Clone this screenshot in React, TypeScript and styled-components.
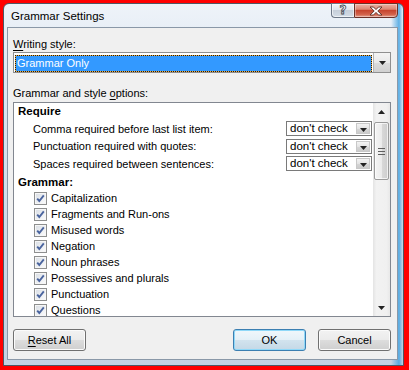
import React from 'react'
import styled, { createGlobalStyle } from 'styled-components'

const GlobalStyle = createGlobalStyle`
  body {
    margin: 0;
    background: #fff;
    font-family: "Liberation Sans", Arial, sans-serif;
    font-size: 11px;
    color: #000;
  }
`

const requireOptions = [
    'Comma required before last list item:',
    'Punctuation required with quotes:',
    'Spaces required between sentences:',
]

const grammarOptions = [
    'Capitalization',
    'Fragments and Run-ons',
    'Misused words',
    'Negation',
    'Noun phrases',
    'Possessives and plurals',
    'Punctuation',
    'Questions',
]

const Arrow = ({ up }: { up?: boolean }) => (
    <svg width="7" height="4" viewBox="0 0 7 4">
        <path d={up ? 'M0 4 L3.5 0 L7 4 Z' : 'M0 0 L7 0 L3.5 4 Z'} fill="#222" />
    </svg>
)

const CheckBox = () => (
    <CheckBoxBox>
        <svg width="11" height="11" viewBox="0 0 11 11">
            <path d="M2.2 5.6 L4.3 8 L8.8 2.4" fill="none" stroke="#4a649e" strokeWidth="1.9" />
        </svg>
    </CheckBoxBox>
)

const MiniSelect = ({ value }: { value: string }) => (
    <MiniSelectBox>
        <span>{value}</span>
        <MiniSelectButton>
            <Arrow />
        </MiniSelectButton>
    </MiniSelectBox>
)

const GrammarSettings = () => {
    return (
        <Window>
            <GlobalStyle />
            <Frame>
                <TitleBar>
                    <Title>Grammar Settings</Title>
                    <CaptionButtons>
                        <HelpButton>?</HelpButton>
                        <CloseButton>
                            <svg width="14" height="10" viewBox="0 0 14 10">
                                <path
                                    d="M1 1 L4.5 1 L7 3.6 L9.5 1 L13 1 L8.8 5 L13 9 L9.5 9 L7 6.4 L4.5 9 L1 9 L5.2 5 Z"
                                    fill="#fff"
                                    stroke="#5a2a22"
                                    strokeWidth="0.9"
                                    strokeLinejoin="round"
                                />
                            </svg>
                        </CloseButton>
                    </CaptionButtons>
                </TitleBar>

                <Client>
                    <Label><u>W</u>riting style:</Label>
                    <Select>
                        <Highlight>Grammar Only</Highlight>
                        <SelectButton>
                            <Arrow />
                        </SelectButton>
                    </Select>

                    <Label className="options">Grammar and style <u>o</u>ptions:</Label>
                    <ListBox>
                        <ListContent>
                            <Heading>Require</Heading>
                            {requireOptions.map((o) => (
                                <SettingRow key={o}>
                                    <span>{o}</span>
                                    <MiniSelect value="don't check" />
                                </SettingRow>
                            ))}
                            <Heading className="grammar">Grammar:</Heading>
                            {grammarOptions.map((o) => (
                                <CheckRow key={o}>
                                    <CheckBox />
                                    <span>{o}</span>
                                </CheckRow>
                            ))}
                        </ListContent>
                        <ScrollBar>
                            <ScrollArrow><Arrow up /></ScrollArrow>
                            <ScrollThumb>
                                <Grip />
                            </ScrollThumb>
                            <ScrollTrack />
                            <ScrollArrow><Arrow /></ScrollArrow>
                        </ScrollBar>
                    </ListBox>

                    <ButtonRow>
                        <Button><u>R</u>eset All</Button>
                        <Spacer />
                        <Button primary>OK</Button>
                        <Button>Cancel</Button>
                    </ButtonRow>
                </Client>
            </Frame>
        </Window>
    )
}

const Window = styled.div`
    width: 409px;
    height: 370px;
    box-sizing: border-box;
    background: #ff0000;
    border-style: solid;
    border-color: #ff0000;
    border-width: 3px 5px 4px 3px;
    display: flex;
`

const Frame = styled.div`
    flex: 1;
    display: flex;
    flex-direction: column;
    border: 1px solid #4d5866;
    border-radius: 6px 6px 0 0;
    padding: 0 5px 5px 3px;
    background:
        linear-gradient(90deg, rgba(255,255,255,0) 97%, rgba(60,160,225,0.8) 99%, rgba(255,255,255,0) 100%),
        linear-gradient(180deg, #eef3f9 0%, #dde7f2 20%, #cfdbe8 60%, #c4d2e2 100%);
`

const TitleBar = styled.div`
    height: 23px;
    display: flex;
    align-items: flex-start;
`

const Title = styled.div`
    padding: 5px 0 0 4px;
    line-height: 14px;
    font-size: 11.5px;
    color: #000;
`

const CaptionButtons = styled.div`
    margin-left: auto;
    margin-top: -1px;
    display: flex;
    height: 15px;
`

const HelpButton = styled.div`
    width: 23px;
    box-sizing: border-box;
    border: 1px solid #6c7787;
    border-right: none;
    border-radius: 0 0 0 4px;
    background: linear-gradient(180deg, #f1f4f8 0%, #dfe5ec 45%, #c6cfda 50%, #d4dde7 100%);
    box-shadow: inset 0 0 0 1px rgba(255,255,255,0.6);
    display: flex;
    align-items: center;
    justify-content: center;
    font-family: "DejaVu Sans", sans-serif;
    font-weight: bold;
    font-size: 12px;
    line-height: 13px;
    color: #fff;
    -webkit-text-stroke: 0.8px #3e4650;
`

const CloseButton = styled.div`
    width: 44px;
    box-sizing: border-box;
    border: 1px solid #6a3028;
    border-radius: 0 0 4px 0;
    background: linear-gradient(180deg, #eab2a5 0%, #dc8774 40%, #c7452f 50%, #d2624b 80%, #e6a08e 100%);
    box-shadow: inset 0 0 0 1px rgba(255,255,255,0.35);
    display: flex;
    align-items: center;
    justify-content: center;
`

const Client = styled.div`
    flex: 1;
    display: flex;
    flex-direction: column;
    background: #f0f0f0;
    border: 1px solid #8a98a8;
    padding: 0 6px 8px 5px;
    u {
        text-decoration: underline;
        text-underline-offset: 2px;
    }
`

const Label = styled.div`
    margin-top: 8px;
    height: 16px;
    line-height: 16px;
    &.options {
        margin-top: 12px;
    }
`

const Select = styled.div`
    height: 21px;
    box-sizing: border-box;
    border: 1px solid #8f8f8f;
    background: #fff;
    display: flex;
    padding: 1px 0 0 1px;
`

const Highlight = styled.div`
    flex: 1;
    height: 17px;
    margin-top: 1px;
    box-sizing: border-box;
    border: 1px dotted #1a1a1a;
    background:
        linear-gradient(#3399ff, #3399ff) padding-box,
        #f0b040 border-box;
    color: #fff;
    line-height: 15px;
    padding-left: 1px;
`

const SelectButton = styled.div`
    width: 17px;
    height: 19px;
    margin: -1px 0 0 1px;
    box-sizing: border-box;
    border-left: 1px solid #b5b5b5;
    background: linear-gradient(180deg, #f4f4f4 0%, #e9e9e9 50%, #dcdcdc 51%, #d0d0d0 100%);
    display: flex;
    align-items: center;
    justify-content: center;
`

const ListBox = styled.div`
    margin-top: 1px;
    height: 215px;
    box-sizing: border-box;
    border: 1px solid #828790;
    background: #fff;
    display: flex;
`

const ListContent = styled.div`
    flex: 1;
    overflow: hidden;
    padding: 0 1px 0 4px;
`

const Heading = styled.div`
    font-weight: bold;
    font-size: 11.5px;
    height: 17px;
    line-height: 17px;
    &.grammar {
        height: 17.5px;
        line-height: 18px;
    }
`

const SettingRow = styled.div`
    height: 17.5px;
    display: flex;
    align-items: center;
    justify-content: space-between;
    padding-left: 15px;
`

const MiniSelectBox = styled.div`
    width: 86px;
    height: 15px;
    box-sizing: border-box;
    border: 1px solid #7a7a7a;
    display: flex;
    align-items: center;
    padding-left: 3px;
    span {
        flex: 1;
        line-height: 13px;
        font-size: 11.5px;
    }
`

const MiniSelectButton = styled.div`
    width: 14px;
    height: 11px;
    margin-right: 1px;
    box-sizing: border-box;
    border: 1px solid #c8c8c8;
    background: linear-gradient(180deg, #f3f3f3 0%, #e4e4e4 50%, #d6d6d6 51%, #cbcbcb 100%);
    display: flex;
    align-items: flex-end;
    justify-content: center;
    padding-bottom: 1px;
`

const CheckRow = styled.div`
    height: 16px;
    display: flex;
    align-items: center;
    gap: 4px;
    padding-left: 16px;
    span {
        line-height: 13px;
    }
`

const CheckBoxBox = styled.div`
    width: 13px;
    height: 13px;
    box-sizing: border-box;
    border: 1px solid #8e8f8f;
    background: linear-gradient(135deg, #d8dde4 0%, #eef0f3 60%, #fdfdfd 100%);
    box-shadow: inset 0 0 0 1px #f6f6f6;
    display: flex;
    align-items: center;
    justify-content: center;
`

const ScrollBar = styled.div`
    width: 17px;
    display: flex;
    flex-direction: column;
    background: linear-gradient(90deg, #e4e4e4 0%, #f2f2f2 20%, #f0f0f0 80%, #e8e8e8 100%);
`

const ScrollArrow = styled.div`
    height: 17px;
    display: flex;
    align-items: center;
    justify-content: center;
`

const ScrollThumb = styled.div`
    margin: 2px 1px 0;
    height: 58px;
    box-sizing: border-box;
    border: 1px solid #9a9a9a;
    border-radius: 2px;
    background: linear-gradient(90deg, #f5f5f5 0%, #ebebeb 50%, #d9d9d9 51%, #cdcdcd 100%);
    box-shadow: inset 0 0 0 1px rgba(255,255,255,0.7);
    display: flex;
    align-items: center;
    justify-content: center;
`

const Grip = styled.div`
    width: 7px;
    height: 7px;
    background: repeating-linear-gradient(180deg, #606060 0px, #606060 1px, transparent 1px, transparent 3px);
`

const ScrollTrack = styled.div`
    flex: 1;
`

const ButtonRow = styled.div`
    margin-top: 12px;
    display: flex;
    gap: 12px;
`

const Spacer = styled.div`
    flex: 1;
`

const Button = styled.div<{ primary?: boolean }>`
    width: 73px;
    height: 22px;
    box-sizing: border-box;
    border: 1px solid ${(p) => (p.primary ? '#3c7fb1' : '#707070')};
    border-radius: 3px;
    background: ${(p) =>
        p.primary
            ? 'linear-gradient(180deg, #f0f7fb 0%, #e4f0f7 50%, #d2e3ee 51%, #c4d8e6 100%)'
            : 'linear-gradient(180deg, #f2f2f2 0%, #ebebeb 50%, #dddddd 51%, #cfcfcf 100%)'};
    box-shadow: inset 0 0 0 1px ${(p) => (p.primary ? '#8fd8f8' : '#fbfbfb')};
    display: flex;
    align-items: center;
    justify-content: center;
    line-height: 16px;
`

export default GrammarSettings
